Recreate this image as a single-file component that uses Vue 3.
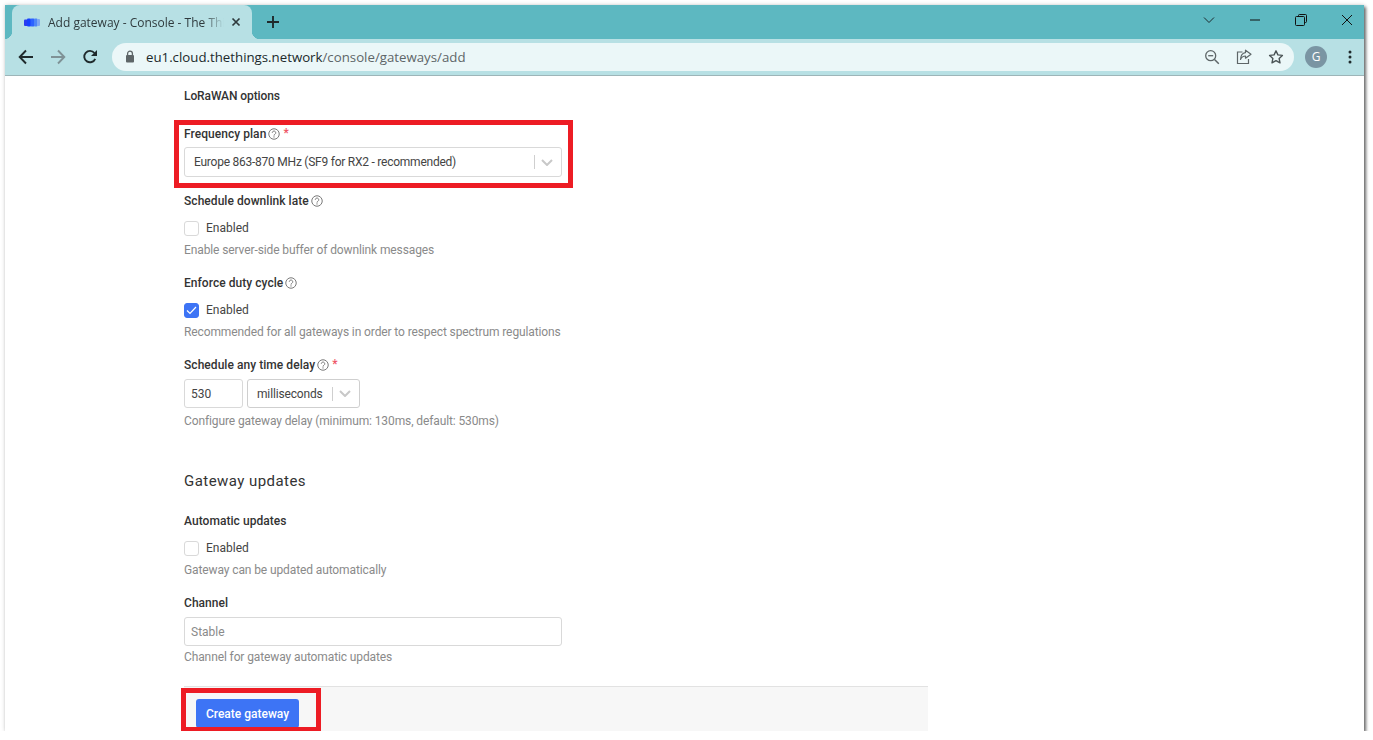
<script setup>
const chevron = "M1 1l5 5 5-5";
</script>

<template>
  <div class="window">
    <header class="tabstrip">
      <div class="tab">
        <svg class="favicon" width="16" height="9" viewBox="0 0 16 9">
          <defs><filter id="soft"><feGaussianBlur stdDeviation="0.35" /></filter></defs>
          <g filter="url(#soft)">
            <rect x="0" y="1.5" width="4" height="6.5" rx="1" fill="#2a3cf0" />
            <rect x="3" y="0.5" width="4" height="8" rx="1" fill="#1540ff" />
            <rect x="6.5" y="0.5" width="4" height="8" rx="1" fill="#2f63ff" />
            <rect x="10" y="0.5" width="3.5" height="8" rx="1" fill="#4f86f7" />
            <rect x="13" y="1" width="3" height="7" rx="1" fill="#7fa8f2" />
          </g>
        </svg>
        <span class="tab-title">Add gateway - Console - The Thi</span>
        <svg class="tab-close" width="10" height="10" viewBox="0 0 10 10"><path d="M1.5 1.5l7 7M8.5 1.5l-7 7" stroke="#2f3a3d" stroke-width="1.7" /></svg>
      </div>
      <svg class="new-tab" width="14" height="14" viewBox="0 0 14 14"><path d="M7 1v12M1 7h12" stroke="#1f2a2c" stroke-width="1.9" /></svg>
      <div class="win-controls">
        <button class="win-btn"><svg width="12" height="8" viewBox="0 0 12 8"><path d="M1 1.5l5 5 5-5" fill="none" stroke="#1c2a2e" stroke-width="1" /></svg></button>
        <button class="win-btn"><svg width="12" height="2" viewBox="0 0 12 2"><path d="M1 1h10" stroke="#111" stroke-width="1" /></svg></button>
        <button class="win-btn"><svg width="12" height="12" viewBox="0 0 12 12"><path d="M3.5 2.5V1.5a1 1 0 0 1 1-1h6a1 1 0 0 1 1 1v6a1 1 0 0 1-1 1h-1" fill="none" stroke="#111" /><rect x="0.5" y="2.5" width="9" height="9" rx="1" fill="none" stroke="#111" /></svg></button>
        <button class="win-btn"><svg width="12" height="12" viewBox="0 0 12 12"><path d="M1 1l10 10M11 1L1 11" stroke="#111" stroke-width="1" /></svg></button>
      </div>
    </header>

    <nav class="toolbar">
      <div class="nav-icons">
        <svg width="16" height="16" viewBox="0 0 16 16"><path d="M15 8H2M8 1.5L1.7 8 8 14.5" fill="none" stroke="#1f2a2c" stroke-width="1.9" /></svg>
        <svg width="16" height="16" viewBox="0 0 16 16"><path d="M1 8h13M8 1.5L14.3 8 8 14.5" fill="none" stroke="#7f9296" stroke-width="1.9" /></svg>
        <svg width="16" height="16" viewBox="0 0 16 16"><path d="M13.2 9.8A5.7 5.7 0 1 1 12.4 4" fill="none" stroke="#1f2a2c" stroke-width="1.9" /><path d="M15 1v6H9z" fill="#1f2a2c" /></svg>
      </div>
      <div class="omnibox">
        <svg class="lock" width="10" height="13" viewBox="0 0 10 13"><path d="M2.6 5V3.6a2.4 2.4 0 0 1 4.8 0V5" fill="none" stroke="#5e6668" stroke-width="1.3" /><rect x="1" y="5" width="8" height="7.5" rx="1" fill="#5e6668" /></svg>
        <span class="url"><span class="url-host">eu1.cloud.thethings.network</span>/console/gateways/add</span>
        <div class="omni-icons">
          <svg width="16" height="16" viewBox="0 0 16 16"><circle cx="6.7" cy="6.7" r="5" fill="none" stroke="#5e6668" stroke-width="1.3" /><path d="M10.5 10.5l4.3 4.3" stroke="#5e6668" stroke-width="1.5" /><path d="M4.2 6.7h5" stroke="#5e6668" stroke-width="1.3" /></svg>
          <svg width="16" height="16" viewBox="0 0 16 16"><path d="M6.5 3H1.5v11.5h11V10" fill="none" stroke="#5e6668" stroke-width="1.2" /><path d="M9.5 1.2L15 5.2l-5.5 4V7C7 7 5.5 8.2 4.5 10.5 4.7 6.8 6.6 4 9.5 3.6z" fill="none" stroke="#5e6668" stroke-width="1.2" stroke-linejoin="round" /></svg>
          <svg width="16" height="16" viewBox="0 0 16 16"><path d="M8 1.8l1.9 4.1 4.5.5-3.3 3 .9 4.4L8 11.6l-4 2.2.9-4.4-3.3-3 4.5-.5z" fill="none" stroke="#4a5355" stroke-width="1.4" stroke-linejoin="round" /></svg>
        </div>
      </div>
      <div class="avatar">G</div>
      <svg class="kebab" width="4" height="14" viewBox="0 0 4 14"><circle cx="2" cy="2" r="1.5" fill="#1f2a2c" /><circle cx="2" cy="7" r="1.5" fill="#1f2a2c" /><circle cx="2" cy="12" r="1.5" fill="#1f2a2c" /></svg>
    </nav>

    <main class="page">
      <form class="form" @submit.prevent>
        <h4 class="subhead">LoRaWAN options</h4>

        <div class="field field-plan">
          <label class="label">Frequency plan
            <svg class="help" width="12" height="12" viewBox="0 0 11 11"><circle cx="5.5" cy="5.5" r="4.8" fill="none" stroke="#777" stroke-width="0.9" /><path d="M3.9 4.4a1.6 1.6 0 1 1 2.5 1.3c-.6.4-.9.6-.9 1.3" fill="none" stroke="#777" stroke-width="0.9" /><circle cx="5.5" cy="8.2" r="0.6" fill="#777" /></svg>
            <span class="req">*</span>
          </label>
          <div class="select select-wide">
            <span class="select-value plan-value">Europe 863-870 MHz (SF9 for RX2 - recommended)</span>
            <span class="select-sep"></span>
            <svg class="select-chev" width="12" height="7" viewBox="0 0 12 7"><path :d="chevron" fill="none" stroke="#c8c8c8" stroke-width="2" /></svg>
          </div>
          <span class="mark mark-plan"></span>
        </div>

        <div class="field">
          <label class="label">Schedule downlink late
            <svg class="help" width="12" height="12" viewBox="0 0 11 11"><circle cx="5.5" cy="5.5" r="4.8" fill="none" stroke="#777" stroke-width="0.9" /><path d="M3.9 4.4a1.6 1.6 0 1 1 2.5 1.3c-.6.4-.9.6-.9 1.3" fill="none" stroke="#777" stroke-width="0.9" /><circle cx="5.5" cy="8.2" r="0.6" fill="#777" /></svg>
          </label>
          <div class="check-row"><span class="checkbox"></span>Enabled</div>
          <p class="hint">Enable server-side buffer of downlink messages</p>
        </div>

        <div class="field">
          <label class="label">Enforce duty cycle
            <svg class="help" width="12" height="12" viewBox="0 0 11 11"><circle cx="5.5" cy="5.5" r="4.8" fill="none" stroke="#777" stroke-width="0.9" /><path d="M3.9 4.4a1.6 1.6 0 1 1 2.5 1.3c-.6.4-.9.6-.9 1.3" fill="none" stroke="#777" stroke-width="0.9" /><circle cx="5.5" cy="8.2" r="0.6" fill="#777" /></svg>
          </label>
          <div class="check-row"><span class="checkbox checked"><svg width="11" height="9" viewBox="0 0 11 9"><path d="M1 4.5l3 3 6-6.5" fill="none" stroke="#fff" stroke-width="1.2" /></svg></span>Enabled</div>
          <p class="hint">Recommended for all gateways in order to respect spectrum regulations</p>
        </div>

        <div class="field">
          <label class="label">Schedule any time delay
            <svg class="help" width="12" height="12" viewBox="0 0 11 11"><circle cx="5.5" cy="5.5" r="4.8" fill="none" stroke="#777" stroke-width="0.9" /><path d="M3.9 4.4a1.6 1.6 0 1 1 2.5 1.3c-.6.4-.9.6-.9 1.3" fill="none" stroke="#777" stroke-width="0.9" /><circle cx="5.5" cy="8.2" r="0.6" fill="#777" /></svg>
            <span class="req">*</span>
          </label>
          <div class="delay-row">
            <div class="input input-short">530</div>
            <div class="select select-unit">
              <span class="select-value unit-value">milliseconds</span>
              <span class="select-sep"></span>
              <svg class="select-chev" width="12" height="7" viewBox="0 0 12 7"><path :d="chevron" fill="none" stroke="#c8c8c8" stroke-width="2" /></svg>
            </div>
          </div>
          <p class="hint hint-delay">Configure gateway delay (minimum: 130ms, default: 530ms)</p>
        </div>

        <h3 class="section">Gateway updates</h3>

        <div class="field">
          <label class="label">Automatic updates</label>
          <div class="check-row"><span class="checkbox"></span>Enabled</div>
          <p class="hint">Gateway can be updated automatically</p>
        </div>

        <div class="field">
          <label class="label">Channel</label>
          <div class="input input-wide placeholder">Stable</div>
          <p class="hint hint-channel">Channel for gateway automatic updates</p>
        </div>

        <div class="submit-bar">
          <button class="primary" type="submit">Create gateway</button>
          <span class="mark mark-submit"></span>
        </div>
      </form>
    </main>
  </div>
</template>

<style>
html, body { margin: 0; background: #fff; overflow: hidden; }
</style>

<style scoped>
.window {
  position: relative;
  margin: 5px 0 0 5px;
  width: 1359px;
  height: 726px;
  display: flex;
  flex-direction: column;
  overflow: hidden;
  background: #fff;
  font-family: Roboto, sans-serif;
  color: #333;
  box-shadow: 2px 2px 3px rgba(0, 0, 0, 0.55), 0 0 4px rgba(0, 0, 0, 0.18);
}

/* browser chrome */
.tabstrip {
  height: 34px;
  flex: none;
  background: #5db8c1;
  display: flex;
  align-items: stretch;
  padding-left: 7px;
  box-sizing: border-box;
}
.tab {
  position: relative;
  width: 240px;
  background: #b7e0e4;
  border-radius: 8px 8px 0 0;
  display: flex;
  align-items: center;
  padding-left: 12px;
  box-sizing: border-box;
}
.tab::before, .tab::after {
  content: "";
  position: absolute;
  bottom: 0;
  width: 8px;
  height: 8px;
}
.tab::before { left: -8px; background: radial-gradient(circle at 0 0, transparent 8px, #b7e0e4 8.5px); }
.tab::after { right: -8px; background: radial-gradient(circle at 100% 0, transparent 8px, #b7e0e4 8.5px); }
.favicon { flex: none; margin-right: 8px; }
.tab-title {
  width: 176px;
  flex: none;
  white-space: nowrap;
  font-family: "Open Sans", sans-serif;
  font-size: 12px;
  color: #2f3a3d;
  -webkit-mask-image: linear-gradient(to right, #000 155px, transparent 176px);
  mask-image: linear-gradient(to right, #000 155px, transparent 176px);
}
.tab-close { flex: none; margin-left: 7px; }
.new-tab { align-self: center; margin-left: 14px; }
.win-controls { margin-left: auto; margin-right: -6px; display: flex; align-items: flex-start; }
.win-btn {
  width: 46px;
  height: 29px;
  border: 0;
  padding: 0;
  background: transparent;
  display: flex;
  align-items: center;
  justify-content: center;
}
.toolbar {
  height: 37px;
  flex: none;
  background: #b7e0e4;
  border-bottom: 1px solid #9db5b8;
  box-sizing: border-box;
  display: flex;
  align-items: center;
  padding: 0 0 1px 13px;
}
.nav-icons { display: flex; gap: 16px; }
.omnibox {
  margin-left: 14px;
  width: 1182px;
  height: 28px;
  background: #ebf7f8;
  border-radius: 14px;
  display: flex;
  align-items: center;
  padding: 0 10px 0 13px;
  box-sizing: border-box;
}
.lock { flex: none; margin-right: 11px; }
.url { font-family: "Open Sans", sans-serif; font-size: 13.25px; color: #5e6668; white-space: nowrap; }
.url-host { color: #20292b; }
.omni-icons { margin-left: auto; display: flex; gap: 16px; }
.avatar {
  margin-left: 11px;
  width: 22px;
  height: 22px;
  border-radius: 50%;
  background: #7a95a3;
  color: #fff;
  font-family: "Open Sans", sans-serif;
  font-size: 12px;
  display: flex;
  align-items: center;
  justify-content: center;
}
.kebab { margin-left: 21px; }

/* form page */
.page { flex: 1; min-height: 0; overflow: hidden; background: #fff; }
.form { margin-left: 179px; width: 744px; padding-top: 10px; font-size: 12px; }
.subhead { margin: 0 0 17px; font-size: 12px; line-height: 20px; font-weight: 500; color: #333; letter-spacing: -0.1px; }
.field { position: relative; width: 378px; margin-bottom: 14px; }
.field-plan { margin-bottom: 13px; }
.label {
  display: flex;
  align-items: center;
  box-sizing: border-box;
  height: 20px;
  padding-top: 2px;
  font-weight: 500;
  letter-spacing: 0.05px;
  color: #333;
  white-space: nowrap;
}
.help { margin-left: 2px; }
.req { color: #ee5566; margin-left: 3px; position: relative; top: -1px; }
.select, .input {
  box-sizing: border-box;
  border: 1px solid #d9d9d9;
  border-radius: 3px;
  background: #fff;
  display: flex;
  align-items: center;
  color: #444;
}
.select-wide { margin-top: 4px; height: 30px; width: 378px; padding-left: 9px; }
.select-value { white-space: nowrap; }
.plan-value { letter-spacing: -0.24px; }
.unit-value { letter-spacing: -0.15px; }
.select-sep { width: 1px; height: 14px; background: #cfcfcf; margin-left: auto; }
.select-chev { margin: 0 8px 0 6px; }
.check-row { display: flex; align-items: center; height: 20px; margin-top: 8px; color: #444; }
.checkbox {
  box-sizing: border-box;
  width: 15px;
  height: 15px;
  border: 1px solid #d9d9d9;
  border-radius: 3px;
  margin-right: 7px;
  display: flex;
  align-items: center;
  justify-content: center;
}
.checked { background: #3d74f5; border-color: #3d74f5; }
.hint { margin: 4px 0 0; line-height: 16px; color: #8a8a8a; white-space: nowrap; letter-spacing: -0.11px; }
.delay-row { display: flex; gap: 4px; margin-top: 5px; }
.input-short { width: 59px; height: 29px; padding-left: 6px; }
.select-unit { width: 113px; height: 29px; padding-left: 9px; border-color: #cfcfcf; }
.hint-delay { margin-top: 5px; }
.section { margin: 41px 0 18px; font-size: 15px; line-height: 22px; font-weight: 400; letter-spacing: 0.45px; color: #333; height: 22px; }
.input-wide { margin-top: 5px; width: 378px; height: 29px; padding-left: 6px; }
.placeholder { color: #8a8a8a; }
.hint-channel { margin-top: 3px; }
.submit-bar {
  position: relative;
  margin-top: 21px;
  height: 45px;
  width: 744px;
  background: #f7f7f7;
  border-top: 1px solid #e2e2e2;
  box-sizing: border-box;
  padding: 12px 0 0 12px;
}
.primary {
  width: 103px;
  height: 29px;
  border: 0;
  border-radius: 3px;
  background: #3d74f5;
  color: #fff;
  font-family: inherit;
  font-size: 12px;
  font-weight: 500;
  padding: 0;
  display: block;
}
.mark { position: absolute; border: 5px solid #ed1c24; box-sizing: border-box; pointer-events: none; }
.mark-plan { left: -10px; top: -3px; width: 399px; height: 68px; }
.mark-submit { left: -3px; top: 1px; width: 140px; height: 44px; }
</style>
